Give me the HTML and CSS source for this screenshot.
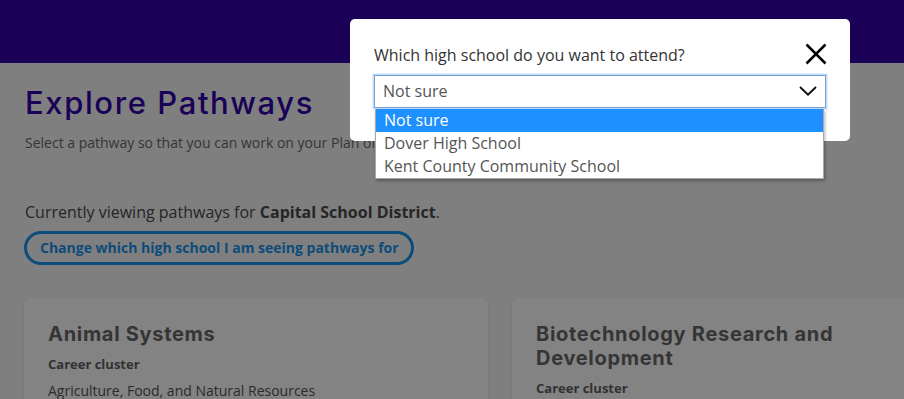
FILE: index.html
```html
<!DOCTYPE html>
<html lang="en">
<head>
<meta charset="utf-8">
<title>Explore Pathways</title>
<link rel="stylesheet" href="styles.css">
</head>
<body>
<header class="site-header"></header>
<main class="page">
  <h1 class="page-title">Explore Pathways</h1>
  <p class="page-intro">Select a pathway so that you can work on your Plan of Study. You can change your pathway later.</p>
  <p class="current">Currently viewing pathways for <strong>Capital School District</strong>.</p>
  <button class="change-btn" type="button">Change which high school I am seeing pathways for</button>
  <section class="cards">
    <article class="card">
      <h2 class="card-title">Animal Systems</h2>
      <h3 class="card-label">Career cluster</h3>
      <p class="card-text">Agriculture, Food, and Natural Resources</p>
    </article>
    <article class="card">
      <h2 class="card-title">Biotechnology Research and Development</h2>
      <h3 class="card-label">Career cluster</h3>
      <p class="card-text">Agriculture, Food, and Natural Resources</p>
    </article>
  </section>
</main>
<div class="overlay"></div>
<div class="modal" role="dialog">
  <div class="modal-head">
    <label class="modal-label">Which high school do you want to attend?</label>
    <button class="close-btn" type="button" aria-label="Close">
      <svg width="22" height="22" viewBox="0 0 22 22"><path d="M1.5 1.5 L20.5 20.5 M20.5 1.5 L1.5 20.5" stroke="#000" stroke-width="2.5" fill="none"/></svg>
    </button>
  </div>
  <div class="select">
    <span class="select-value">Not sure</span>
    <svg class="chevron" width="18" height="10" viewBox="0 0 18 10"><path d="M1 1 L9 8.6 L17 1" stroke="#111" stroke-width="2" fill="none"/></svg>
    <ul class="options">
      <li class="option selected">Not sure</li>
      <li class="option">Dover High School</li>
      <li class="option">Kent County Community School</li>
    </ul>
  </div>
</div>
</body>
</html>
```

FILE: styles.css
```css
html, body {
  margin: 0;
  padding: 0;
}
body {
  background: #f7f7f7;
  font-family: "Open Sans", "Noto Sans", sans-serif;
  color: #555;
  overflow: hidden;
  width: 904px;
  height: 399px;
  position: relative;
}
.site-header {
  height: 63px;
  background: #3300a9;
}
.page {
  padding: 0 24px;
}
.page-title {
  margin: 22px 0 0 1px;
  font-family: Inter, "Noto Sans", sans-serif;
  font-weight: 500;
  font-size: 31px;
  line-height: 36px;
  letter-spacing: 1.6px;
  color: #3300a9;
}
.page-intro {
  margin: 12px 0 0 1px;
  font-size: 14px;
  line-height: 20px;
  color: #6a6a6a;
  white-space: nowrap;
}
.current {
  margin: 47px 0 0 1px;
  font-size: 16px;
  line-height: 24px;
  color: #4a4a4a;
}
.current strong {
  font-weight: 700;
  color: #4a4a4a;
}
.change-btn {
  margin-top: 7px;
  display: block;
  height: 34px;
  padding: 0 12px 0 13px;
  border: 3px solid #1994f0;
  border-radius: 20px;
  background: transparent;
  font-family: "Open Sans", sans-serif;
  font-weight: 700;
  font-size: 14px;
  line-height: 20px;
  color: #1994f0;
}
.cards {
  margin-top: 33px;
  display: grid;
  grid-template-columns: 464px 464px;
  gap: 24px;
}
.card {
  background: #fff;
  border-radius: 6px;
  padding: 24px 24px 20px;
  box-shadow: 0 0 2px rgba(0,0,0,0.08);
}
.card-title {
  margin: 0;
  font-family: Inter, "Noto Sans", sans-serif;
  font-weight: 700;
  font-size: 20px;
  line-height: 24px;
  letter-spacing: 0.7px;
  color: #686868;
}
.card-label {
  margin: 8px 0 0;
  font-size: 13px;
  font-weight: 700;
  line-height: 20px;
  color: #626262;
}
.card-text {
  margin: 7px 0 0;
  font-size: 14px;
  line-height: 20px;
  color: #555;
}
.overlay {
  position: absolute;
  inset: 0;
  background: rgba(0,0,0,0.485);
}
.modal {
  position: absolute;
  left: 350px;
  top: 19px;
  width: 500px;
  box-sizing: border-box;
  padding: 24px 24px 33px;
  background: #fff;
  border-radius: 5px;
}
.modal-head {
  display: flex;
  justify-content: space-between;
  align-items: flex-start;
  height: 24px;
  margin-bottom: 8px;
}
.modal-label {
  font-size: 16px;
  line-height: 24px;
  color: #333;
}
.close-btn {
  margin: 0 -1px 0 0;
  padding: 0;
  border: 0;
  background: none;
  width: 22px;
  height: 22px;
  line-height: 0;
}
.select {
  position: relative;
  height: 33px;
  box-sizing: border-box;
  border: 1px solid #7d9fd8;
  box-shadow: 0 0 0 1.5px #c4dbfa;
  display: flex;
  align-items: center;
  padding: 0 8px 1px;
  justify-content: space-between;
}
.select-value {
  font-size: 16px;
  line-height: 24px;
  color: #555;
}
.options {
  position: absolute;
  left: 0;
  top: 33px;
  width: 447px;
  margin: 0;
  padding: 0;
  list-style: none;
  background: #fff;
  border: 1px solid #a8a8a8;
  border-top: 0;
  box-shadow: 1px 2px 3px rgba(0,0,0,0.3);
}
.option {
  height: 23px;
  padding: 0 8px;
  font-size: 16px;
  line-height: 23px;
  color: #555;
}
.option.selected {
  background: #1e90ff;
  color: #fff;
}
```
